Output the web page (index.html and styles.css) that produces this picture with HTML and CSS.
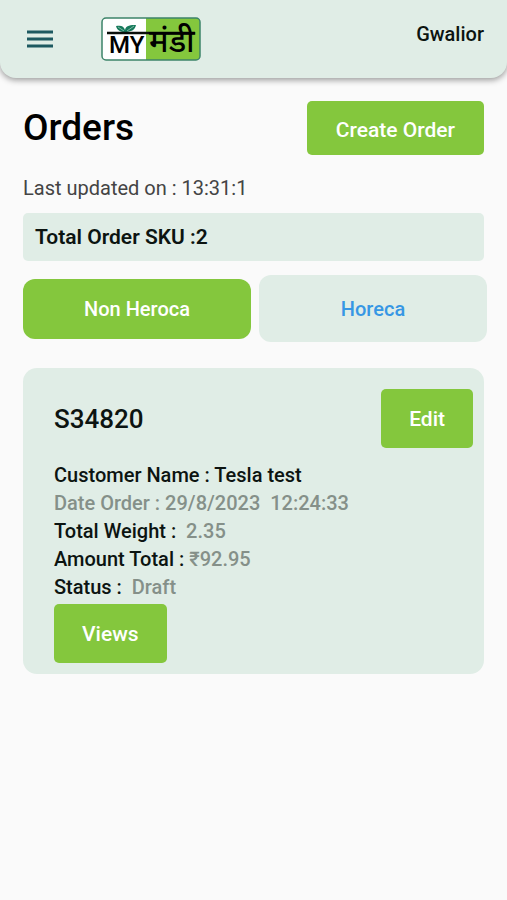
FILE: index.html
```html
<!DOCTYPE html>
<html lang="en">
<head>
<meta charset="utf-8">
<meta name="viewport" content="width=device-width, initial-scale=1">
<title>Orders</title>
<link rel="stylesheet" href="styles.css">
</head>
<body>
<header class="topbar">
  <button class="menu" type="button" aria-label="Menu">
    <svg width="26" height="18" viewBox="0 0 26 18"><path d="M0 2h26M0 9h26M0 16h26" stroke="#1d5960" stroke-width="3"/></svg>
  </button>
  <svg class="logo" width="100" height="44" viewBox="0 0 100 44">
    <rect x="1" y="1" width="98" height="42" rx="4" fill="#fff"/>
    <path d="M45 1h50a4 4 0 0 1 4 4v34a4 4 0 0 1-4 4H45z" fill="#84c73d"/>
    <rect x="1" y="1" width="98" height="42" rx="4" fill="none" stroke="#3c8469" stroke-width="1.5"/>
    <path d="M24 15c-5 0-8-2-9-6 5-1 8 0 9 4 1-5 6-5 11-5-1 5-5 7-11 7z" fill="#177a5c"/>
    <path d="M17 10l6 4M33 9l-7 5" stroke="#7fb9a4" stroke-width="1"/>
    <path d="M6 16h88" stroke="#0b0f0b" stroke-width="2.5"/>
    <text class="logo-latin" x="8" y="36">MY</text>
    <text class="logo-hindi" x="48" y="35">मंडी</text>
  </svg>
  <span class="city">Gwalior</span>
</header>
<main class="page">
  <div class="heading">
    <h1>Orders</h1>
    <button class="btn create" type="button">Create Order</button>
  </div>
  <p class="updated">Last updated on : 13:31:1</p>
  <p class="total">Total Order SKU :2</p>
  <div class="tabs">
    <button class="tab active" type="button">Non Heroca</button>
    <button class="tab" type="button">Horeca</button>
  </div>
  <article class="card">
    <div class="card-head">
      <h2>S34820</h2>
      <button class="btn" type="button">Edit</button>
    </div>
    <ul class="details">
      <li>Customer Name : Tesla test</li>
      <li class="muted">Date Order : 29/8/2023&nbsp; 12:24:33</li>
      <li>Total Weight :&nbsp; <span class="muted">2.35</span></li>
      <li>Amount Total : <span class="muted">₹92.95</span></li>
      <li>Status :&nbsp; <span class="muted">Draft</span></li>
    </ul>
    <button class="btn" type="button">Views</button>
  </article>
</main>
</body>
</html>
```
FILE: styles.css
```css
* { box-sizing: border-box; }
body {
  margin: 0;
  background: #fafafa;
  color: #0c1411;
  font-family: Roboto, "Noto Sans", sans-serif;
  font-size: 20px;
  font-weight: 500;
  line-height: 28px;
}
h1, h2, p, ul { margin: 0; padding: 0; font-weight: 500; }
button { border: 0; font: inherit; cursor: pointer; }
.topbar {
  display: flex;
  align-items: flex-start;
  height: 78px;
  padding: 17px 23px 0 27px;
  background: #e0ede6;
  border-radius: 0 0 16px 16px;
  box-shadow: 0 2px 6px rgba(0, 0, 0, 0.4);
}
.menu { display: flex; padding: 13px 0; background: none; }
.logo { margin-left: 48px; overflow: visible; }
.logo-latin { font: 500 24px Roboto, sans-serif; }
.logo-hindi { font: 500 32px "Noto Sans Devanagari", "Noto Sans", sans-serif; }
.city { margin-left: auto; padding-top: 3px; }
.page { padding: 23px 23px 24px; }
.heading { display: flex; justify-content: space-between; align-items: center; }
h1 { font-size: 37px; line-height: 44px; color: #000; }
.btn {
  height: 59px;
  padding: 0 28px;
  border-radius: 5px;
  background: #84c73d;
  color: #fff;
  font-size: 21px;
}
.create { height: 54px; padding: 4px 29px 0; }
.updated { margin-top: 19px; color: #444; font-weight: 400; }
.total {
  margin-top: 11px;
  padding: 10px 12px;
  border-radius: 5px;
  background: #e0ede6;
  font-size: 21px;
  font-weight: 600;
}
.tabs {
  display: grid;
  grid-template-columns: 1fr 1fr;
  align-items: center;
  gap: 8px;
  margin: 14px -3px 0 0;
}
.tab { height: 67px; border-radius: 12px; background: #e0ede6; color: #3797e4; }
.tab.active { height: 60px; background: #84c73d; color: #fff; }
.card {
  margin-top: 26px;
  padding: 21px 11px 11px 31px;
  border-radius: 14px;
  background: #e0ede6;
}
.card-head { display: flex; justify-content: space-between; align-items: center; }
h2 { font-size: 26px; line-height: 32px; }
.details { margin: 13px 0 3px; list-style: none; }
.muted { color: #859089; }
```
